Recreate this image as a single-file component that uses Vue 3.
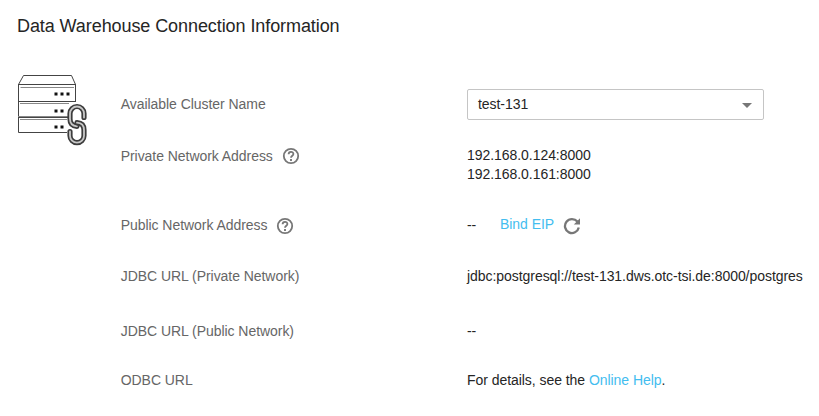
<script setup>
const rows = [
  { key: 'cluster', label: 'Available Cluster Name' },
  { key: 'private', label: 'Private Network Address', help: true },
  { key: 'public', label: 'Public Network Address', help: true },
  { key: 'jdbc-private', label: 'JDBC URL (Private Network)', text: 'jdbc:postgresql://test-131.dws.otc-tsi.de:8000/postgres' },
  { key: 'jdbc-public', label: 'JDBC URL (Public Network)', text: '--' },
  { key: 'odbc', label: 'ODBC URL' },
]
const addresses = ['192.168.0.124:8000', '192.168.0.161:8000']
const upperLink = 'M84 117.5V113.5a7 7 0 0 0-14 0V119c0 5 3 7 7 7.3'
const lowerLink = 'M70 131.5V135.7a7 7 0 0 0 14 0V130c0-5-3-7-7-7.3'
</script>

<template>
  <main class="panel">
    <h1 class="title">Data Warehouse Connection Information</h1>
    <div class="content">
      <svg class="server" viewBox="16 72 72 76" fill="none">
        <path d="M18.5 84.5 23.5 75.5H71.5L75.5 84.5M18.5 84V132.5H67M75.5 84V102M18 84.5H76M18 101.5H76M18 117.5H68" stroke="#444" />
        <path d="M20.5 87.5H74M20 103.5H69M20 119.5H67M18 116.5H68" stroke="#888" />
        <path d="M54.5 92.5h3v3h-3zM60.5 92.5h3v3h-3zM66.5 92.5h3v3h-3zM54.5 109.5h3v3h-3zM60.5 109.5h3v3h-3zM54.5 125.5h3v3h-3zM60.5 125.5h3v3h-3z" fill="#111" />
        <g stroke-linecap="round">
          <path :d="upperLink" stroke="#3c3c3c" stroke-width="5.2" />
          <path :d="upperLink" stroke="#c8c8c8" stroke-width="1.8" />
          <path :d="lowerLink" stroke="#3c3c3c" stroke-width="5.2" />
          <path :d="lowerLink" stroke="#c8c8c8" stroke-width="1.8" />
        </g>
      </svg>

      <div class="rows">
        <div v-for="row in rows" :key="row.key" class="row" :class="row.key">
          <div class="label">
            <span>{{ row.label }}</span>
            <svg v-if="row.help" class="help" viewBox="0 0 18 18" fill="none" stroke="#777">
              <circle cx="9" cy="9" r="7.2" stroke-width="1.8" />
              <path d="M6.6 7.3C6.6 4.1 11.4 4.1 11.4 7.1C11.4 8.8 9 8.8 9 10.8" stroke-width="1.8" />
              <path d="M9 12v1.9" stroke-width="1.9" />
            </svg>
          </div>
          <div class="value">
            <div v-if="row.key === 'cluster'" class="select">
              <span>test-131</span>
              <span class="caret"></span>
            </div>
            <template v-else-if="row.key === 'private'">
              <div v-for="address in addresses" :key="address">{{ address }}</div>
            </template>
            <div v-else-if="row.key === 'public'" class="public-value">
              <span class="empty">--</span>
              <a class="link">Bind EIP</a>
              <svg class="refresh" viewBox="0 0 18 18" fill="none">
                <path d="M14.4 4.6A7 7 0 1 0 15.8 10.6" stroke="#777" stroke-width="2.3" />
                <path d="M17 1.2V7.4H10.8z" fill="#777" />
              </svg>
            </div>
            <template v-else-if="row.key === 'odbc'">For details, see the <a class="link">Online Help</a>.</template>
            <template v-else>{{ row.text }}</template>
          </div>
        </div>
      </div>
    </div>
  </main>
</template>

<style>
body {
  margin: 0;
  background: #fff;
}
</style>

<style scoped>
.panel {
  box-sizing: border-box;
  width: 819px;
  height: 416px;
  padding: 16px 0 0 16px;
  font: 14px/19px "Liberation Sans", Arial, sans-serif;
  letter-spacing: -0.05px;
  color: #252525;
  overflow: hidden;
}
.title {
  margin: 0;
  padding-left: 1px;
  font-size: 18px;
  line-height: 20px;
  font-weight: 400;
  letter-spacing: -0.08px;
}
.content {
  display: flex;
  align-items: flex-start;
  padding-top: 36px;
}
.server {
  width: 72px;
  height: 76px;
  flex: none;
}
.rows {
  display: grid;
  grid-template-rows: 57px 69px 52px 55px 49px 19px;
  padding: 17px 0 0 32.7px;
}
.row {
  display: grid;
  grid-template-columns: 346.3px 337px;
  align-items: start;
}
.cluster .label {
  padding-top: 6px;
}
.private .label,
.public .label {
  padding-top: 1px;
}
.label {
  display: flex;
  color: #666;
}
.help {
  width: 18px;
  height: 18px;
  margin-left: 9px;
}
.public .help {
  margin-top: 1px;
}
.value {
  white-space: nowrap;
}
.select {
  box-sizing: border-box;
  display: flex;
  align-items: center;
  justify-content: space-between;
  width: 297px;
  height: 31px;
  padding: 0 11px 0 10px;
  border: 1px solid #c5c5c5;
  border-radius: 2px;
}
.caret {
  border: 5px solid transparent;
  border-top-color: #777;
  border-bottom: 0;
  margin-top: 2px;
}
.public-value {
  display: flex;
}
.empty {
  width: 33px;
  padding-top: 1px;
}
.link {
  color: #43bdef;
}
.refresh {
  width: 18px;
  height: 18px;
  margin: 2px 0 0 9px;
}
</style>
